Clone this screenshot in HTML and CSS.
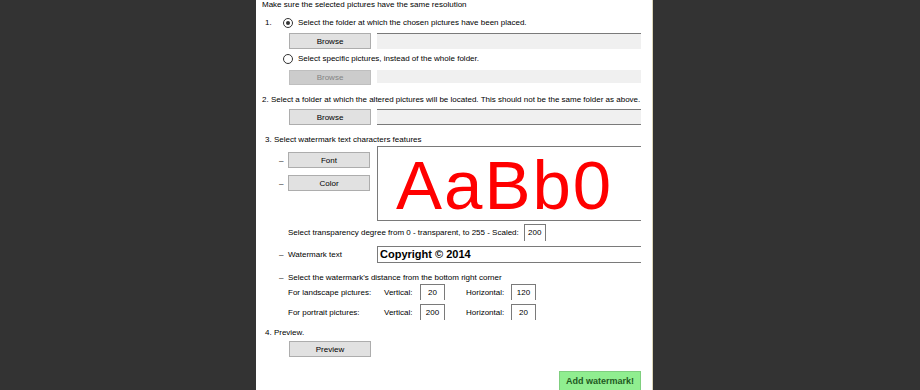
FILE: index.html
```html
<!DOCTYPE html>
<html lang="en">
<head>
  <meta charset="UTF-8" />
  <title>Watermark</title>
  <link rel="stylesheet" href="styles.css">
</head>
<body>
  <div class="window">
    <div class="line title">Make sure the selected pictures have the same resolution</div>

    <!-- 1. source -->
    <div class="opt-row first">
      <span class="num">1.</span>
      <span class="radio checked"></span>
      <span>Select the folder at which the chosen pictures have been placed.</span>
    </div>
    <div class="path-row r1">
      <button class="btn">Browse</button>
      <div class="path"></div>
    </div>
    <div class="opt-row second">
      <span class="radio"></span>
      <span>Select specific pictures, instead of the whole folder.</span>
    </div>
    <div class="path-row r2">
      <button class="btn disabled">Browse</button>
      <div class="path flat"></div>
    </div>

    <!-- 2. destination -->
    <div class="line step2">2. Select a folder at which the altered pictures will be located. This should not be the same folder as above.</div>
    <div class="path-row r3">
      <button class="btn">Browse</button>
      <div class="path boxed"></div>
    </div>

    <!-- 3. features -->
    <div class="line step3">3. Select watermark text characters features</div>
    <div class="features">
      <div class="feature-buttons">
        <div class="dash-row"><span class="dash">&ndash;</span><button class="btn">Font</button></div>
        <div class="dash-row color"><span class="dash">&ndash;</span><button class="btn">Color</button></div>
      </div>
      <div class="sample">AaBb0</div>
    </div>
    <div class="field-row transp">
      <span class="label">Select transparency degree from 0 - transparent, to 255 - Scaled:</span>
      <div class="num-box wide">200</div>
    </div>
    <div class="field-row wm">
      <span class="dash">&ndash;</span>
      <span class="wm-label">Watermark text</span>
      <div class="wm-box">Copyright &copy; 2014</div>
    </div>
    <div class="line distance"><span class="dash">&ndash;</span>Select the watermark's distance from the bottom right corner</div>
    <div class="dist-row land">
      <span class="dist-label">For landscape pictures:</span>
      <span class="axis">Vertical:</span>
      <div class="num-box">20</div>
      <span class="axis h">Horizontal:</span>
      <div class="num-box">120</div>
    </div>
    <div class="dist-row port">
      <span class="dist-label">For portrait pictures:</span>
      <span class="axis">Vertical:</span>
      <div class="num-box">200</div>
      <span class="axis h">Horizontal:</span>
      <div class="num-box">20</div>
    </div>

    <!-- 4. preview -->
    <div class="line step4">4. Preview.</div>
    <button class="btn preview">Preview</button>
    <button class="add-btn">Add watermark!</button>
  </div>
</body>
</html>
```

FILE: styles.css
```css
body {
  margin: 0;
  background-color: #333333;
  font-family: "Liberation Sans", Arial, sans-serif;
  font-size: 8px;
  color: #000;
  overflow: hidden;
}

.window {
  margin-left: 256px;
  width: 396px;
  height: 390px;
  background: #ffffff;
  border-right: 1px solid #ddd6b8;
  overflow: hidden;
}

.line {
  height: 10px;
  line-height: 10px;
  white-space: nowrap;
}

.title {
  padding-left: 6px;
}

.opt-row {
  display: flex;
  align-items: center;
  height: 11px;
  white-space: nowrap;
}

.opt-row.first {
  margin-top: 7px;
}

.opt-row.second {
  margin-top: 4px;
  padding-left: 27px;
}

.num {
  width: 18px;
  margin-left: 9px;
}

.radio {
  width: 8px;
  height: 8px;
  border: 1px solid #333;
  border-radius: 50%;
  margin-right: 5px;
  position: relative;
  box-sizing: content-box;
}

.radio.checked::after {
  content: "";
  position: absolute;
  left: 2px;
  top: 2px;
  width: 4px;
  height: 4px;
  border-radius: 50%;
  background: #333;
}

.path-row {
  display: flex;
  gap: 6px;
  padding-left: 33px;
  height: 16px;
}

.path-row.r1 { margin-top: 5px; }
.path-row.r2 { margin-top: 6px; height: 15px; }
.path-row.r3 { margin-top: 4px; }

.btn {
  width: 82px;
  height: 16px;
  padding: 0;
  margin: 0;
  background: #e1e1e1;
  border: 1px solid #adadad;
  font-family: inherit;
  font-size: 8px;
  color: #000;
}

.btn.disabled {
  background: #cccccc;
  border-color: #bfbfbf;
  color: #838383;
  height: 15px;
}

.path {
  width: 264px;
  background: #f0f0f0;
  border-top: 1px solid #7a7a7a;
  box-sizing: border-box;
}

.path.flat {
  border-top: none;
  height: 13px;
}

.path.boxed {
  border-bottom: 1px solid #7a7a7a;
}

.step2 {
  margin-top: 10px;
  padding-left: 6px;
}

.step3 {
  margin-top: 10px;
  padding-left: 9px;
}

.features {
  display: flex;
  margin-top: 1px;
  height: 75px;
}

.feature-buttons {
  width: 121px;
  padding-top: 6px;
}

.dash-row {
  display: flex;
  align-items: center;
}

.dash-row.color {
  margin-top: 7px;
}

.dash {
  width: 10px;
  margin-left: 23px;
  margin-right: -1px;
}

.sample {
  width: 264px;
  height: 75px;
  box-sizing: border-box;
  border-top: 1px solid #7a7a7a;
  border-left: 1px solid #7a7a7a;
  border-bottom: 1px solid #7a7a7a;
  color: #ff0000;
  font-size: 69px;
  letter-spacing: 2px;
  line-height: 69px;
  padding: 4px 0 0 18px;
  white-space: nowrap;
}

.field-row {
  display: flex;
  align-items: center;
  height: 17px;
  white-space: nowrap;
}

.field-row.transp {
  margin-top: 3px;
  padding-left: 32px;
}

.field-row.transp .label {
  width: 236px;
}

.num-box {
  height: 16px;
  width: 25px;
  box-sizing: border-box;
  border: 1px solid #7a7a7a;
  border-bottom: none;
  text-align: center;
  line-height: 15px;
  background: #fff;
}

.num-box.wide {
  width: 22px;
  height: 17px;
  text-align: left;
  padding-left: 3px;
}

.field-row.wm {
  margin-top: 5px;
}

.wm-label {
  width: 89px;
}

.wm-box {
  width: 264px;
  height: 17px;
  box-sizing: border-box;
  border: 1px solid #7a7a7a;
  border-right: none;
  font-weight: bold;
  font-size: 11px;
  line-height: 15px;
  padding-left: 2px;
}

.distance {
  margin-top: 10px;
  display: flex;
}

.dist-row {
  display: flex;
  align-items: center;
  height: 16px;
  padding-left: 32px;
  white-space: nowrap;
}

.dist-row.land { margin-top: 1px; }
.dist-row.port { margin-top: 4px; }

.dist-label {
  width: 96px;
}

.axis {
  width: 36px;
}

.axis.h {
  width: 45px;
  margin-left: 21px;
}

.step4 {
  margin-top: 8px;
  padding-left: 9px;
}

.btn.preview {
  display: block;
  margin-top: 3px;
  margin-left: 33px;
}

.add-btn {
  display: block;
  margin-top: 14px;
  margin-left: 303px;
  width: 82px;
  height: 22px;
  padding: 0 0 2px;
  background: #90ee90;
  border: 1px solid #7fcf7f;
  color: #1f5a1f;
  font-family: inherit;
  font-weight: bold;
  font-size: 9px;
}
```
